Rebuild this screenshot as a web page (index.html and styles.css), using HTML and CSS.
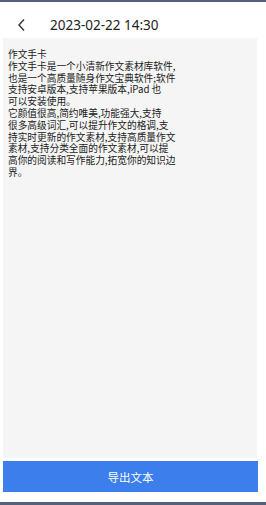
FILE: index.html
```html
<!DOCTYPE html>
<html lang="zh">
<head>
  <meta charset="UTF-8" />
  <meta name="viewport" content="width=device-width, initial-scale=1.0" />
  <title>作文手卡</title>
  <link rel="stylesheet" href="styles.css">
</head>
<body>
  <div class="strip"></div>
  <div class="header">
    <svg class="back" width="10" height="14" viewBox="0 0 10 14">
      <polyline points="7,1.5 2,7 7,12.5" fill="none" stroke="#333" stroke-width="1.4" />
    </svg>
    <span class="title">2023-02-22 14:30</span>
  </div>
  <div class="panel">
    <div class="note">作文手卡
作文手卡是一个小清新作文素材库软件,
也是一个高质量随身作文宝典软件;软件
支持安卓版本,支持苹果版本,iPad 也
可以安装使用。
它颜值很高,简约唯美,功能强大,支持
很多高级词汇,可以提升作文的格调,支
持实时更新的作文素材,支持高质量作文
素材,支持分类全面的作文素材,可以提
高你的阅读和写作能力,拓宽你的知识边
界。</div>
  </div>
  <button class="export">导出文本</button>
  <div class="footer"></div>
  <div class="strip bottom"></div>
</body>
</html>
```

FILE: styles.css
```css
* {
  box-sizing: border-box;
}
html, body {
  height: 100%;
}
body {
  margin: 0;
  background: #fff;
  display: flex;
  flex-direction: column;
  font-family: "Noto Sans CJK SC", "Noto Sans", sans-serif;
  color: #222;
}
.strip {
  height: 2px;
  background: #56607a;
  flex: none;
}
.strip.bottom {
  height: 3px;
}
.header {
  height: 36px;
  display: flex;
  align-items: center;
  padding: 10px 0 0 17px;
  flex: none;
}
.back {
  margin-right: 23px;
}
.title {
  font-family: "Noto Sans", sans-serif;
  font-size: 13.5px;
  color: #222;
}
.panel {
  flex: 1;
  margin: 0 9px 0 3px;
  background: #f5f5f5;
  padding: 11px 5px;
}
.note {
  white-space: pre;
  font-size: 9.7px;
  line-height: 11.8px;
  color: #222;
}
.export {
  margin: 3px 8px 0 3px;
  height: 31px;
  border: none;
  background: #3b7eec;
  color: #fff;
  font-family: "Noto Sans CJK SC", sans-serif;
  font-size: 11.5px;
  flex: none;
}
.footer {
  height: 10px;
  flex: none;
}
```
